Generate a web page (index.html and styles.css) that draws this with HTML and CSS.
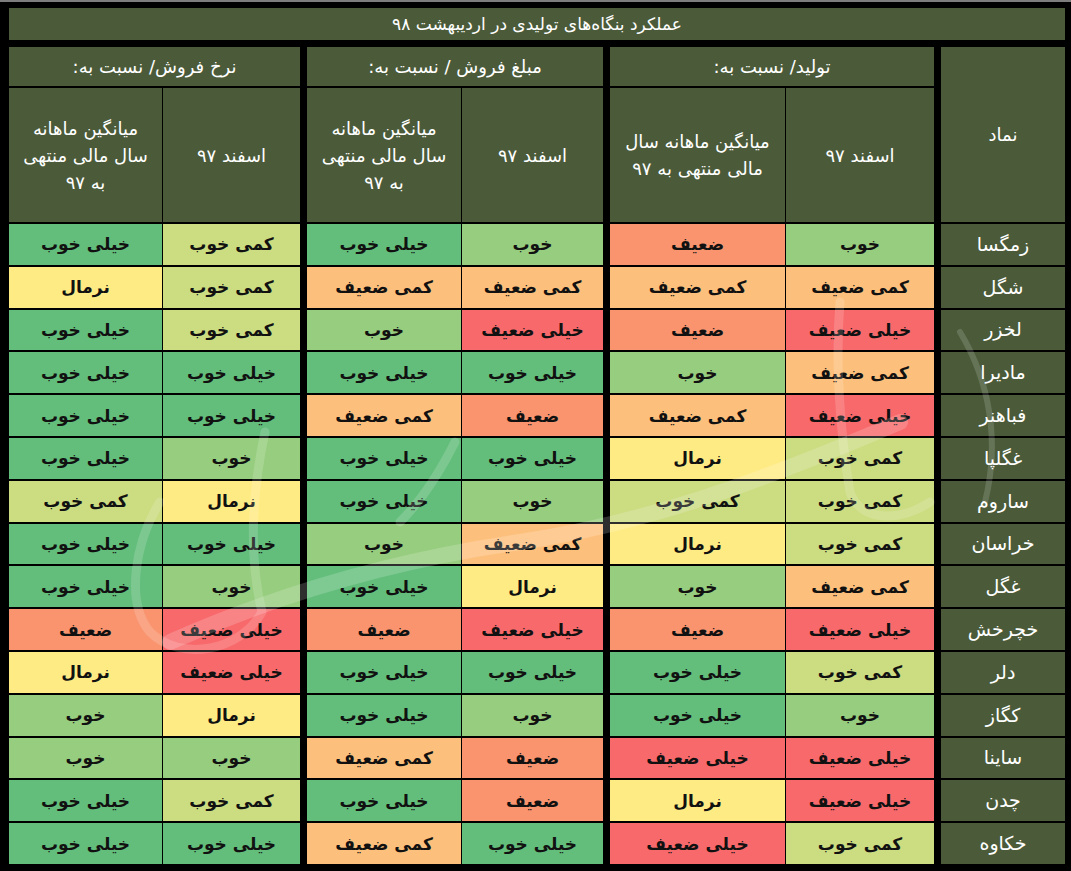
FILE: index.html
```html
<!DOCTYPE html>
<html lang="fa" dir="rtl">
<head>
<meta charset="utf-8">
<title>عملکرد بنگاه‌های تولیدی در اردیبهشت ۹۸</title>
<link rel="stylesheet" href="styles.css">
</head>
<body>
<div class="page">
  <div class="title">عملکرد بنگاه‌های تولیدی در اردیبهشت ۹۸</div>
  <div class="table">
    <div class="group sym">
      <div class="hd rspan">نماد</div>
      <div class="hd name">زمگسا</div>
      <div class="hd name">شگل</div>
      <div class="hd name">لخزر</div>
      <div class="hd name">مادیرا</div>
      <div class="hd name">فباهنر</div>
      <div class="hd name">غگلپا</div>
      <div class="hd name">ساروم</div>
      <div class="hd name">خراسان</div>
      <div class="hd name">غگل</div>
      <div class="hd name">خچرخش</div>
      <div class="hd name">دلر</div>
      <div class="hd name">کگاز</div>
      <div class="hd name">ساینا</div>
      <div class="hd name">چدن</div>
      <div class="hd name">خکاوه</div>
    </div>
    <div class="group prod">
      <div class="hd span2">تولید/ نسبت به:</div>
      <div class="hd">اسفند ۹۷</div>
      <div class="hd">میانگین ماهانه سال<br>مالی منتهی به ۹۷</div>
      <div class="c g">خوب</div><div class="c w">ضعیف</div>
      <div class="c sw">کمی ضعیف</div><div class="c sw">کمی ضعیف</div>
      <div class="c vw">خیلی ضعیف</div><div class="c w">ضعیف</div>
      <div class="c sw">کمی ضعیف</div><div class="c g">خوب</div>
      <div class="c vw">خیلی ضعیف</div><div class="c sw">کمی ضعیف</div>
      <div class="c sg">کمی خوب</div><div class="c n">نرمال</div>
      <div class="c sg">کمی خوب</div><div class="c sg">کمی خوب</div>
      <div class="c sg">کمی خوب</div><div class="c n">نرمال</div>
      <div class="c sw">کمی ضعیف</div><div class="c g">خوب</div>
      <div class="c vw">خیلی ضعیف</div><div class="c w">ضعیف</div>
      <div class="c sg">کمی خوب</div><div class="c vg">خیلی خوب</div>
      <div class="c g">خوب</div><div class="c vg">خیلی خوب</div>
      <div class="c vw">خیلی ضعیف</div><div class="c vw">خیلی ضعیف</div>
      <div class="c vw">خیلی ضعیف</div><div class="c n">نرمال</div>
      <div class="c sg">کمی خوب</div><div class="c vw">خیلی ضعیف</div>
    </div>
    <div class="group amount">
      <div class="hd span2">مبلغ فروش / نسبت به:</div>
      <div class="hd">اسفند ۹۷</div>
      <div class="hd">میانگین ماهانه<br>سال مالی منتهی<br>به ۹۷</div>
      <div class="c g">خوب</div><div class="c vg">خیلی خوب</div>
      <div class="c sw">کمی ضعیف</div><div class="c sw">کمی ضعیف</div>
      <div class="c vw">خیلی ضعیف</div><div class="c g">خوب</div>
      <div class="c vg">خیلی خوب</div><div class="c vg">خیلی خوب</div>
      <div class="c w">ضعیف</div><div class="c sw">کمی ضعیف</div>
      <div class="c vg">خیلی خوب</div><div class="c vg">خیلی خوب</div>
      <div class="c g">خوب</div><div class="c vg">خیلی خوب</div>
      <div class="c sw">کمی ضعیف</div><div class="c g">خوب</div>
      <div class="c n">نرمال</div><div class="c vg">خیلی خوب</div>
      <div class="c vw">خیلی ضعیف</div><div class="c w">ضعیف</div>
      <div class="c vg">خیلی خوب</div><div class="c vg">خیلی خوب</div>
      <div class="c g">خوب</div><div class="c vg">خیلی خوب</div>
      <div class="c w">ضعیف</div><div class="c sw">کمی ضعیف</div>
      <div class="c w">ضعیف</div><div class="c vg">خیلی خوب</div>
      <div class="c vg">خیلی خوب</div><div class="c sw">کمی ضعیف</div>
    </div>
    <div class="group rate">
      <div class="hd span2">نرخ فروش/ نسبت به:</div>
      <div class="hd">اسفند ۹۷</div>
      <div class="hd">میانگین ماهانه<br>سال مالی منتهی<br>به ۹۷</div>
      <div class="c sg">کمی خوب</div><div class="c vg">خیلی خوب</div>
      <div class="c sg">کمی خوب</div><div class="c n">نرمال</div>
      <div class="c sg">کمی خوب</div><div class="c vg">خیلی خوب</div>
      <div class="c vg">خیلی خوب</div><div class="c vg">خیلی خوب</div>
      <div class="c vg">خیلی خوب</div><div class="c vg">خیلی خوب</div>
      <div class="c g">خوب</div><div class="c vg">خیلی خوب</div>
      <div class="c n">نرمال</div><div class="c sg">کمی خوب</div>
      <div class="c vg">خیلی خوب</div><div class="c vg">خیلی خوب</div>
      <div class="c g">خوب</div><div class="c vg">خیلی خوب</div>
      <div class="c vw">خیلی ضعیف</div><div class="c w">ضعیف</div>
      <div class="c vw">خیلی ضعیف</div><div class="c n">نرمال</div>
      <div class="c n">نرمال</div><div class="c g">خوب</div>
      <div class="c g">خوب</div><div class="c g">خوب</div>
      <div class="c sg">کمی خوب</div><div class="c vg">خیلی خوب</div>
      <div class="c vg">خیلی خوب</div><div class="c vg">خیلی خوب</div>
    </div>
  </div>
  <svg class="watermark" width="1071" height="871" viewBox="0 0 1071 871" aria-hidden="true">
    <g fill="none" stroke="#ffffff" stroke-linecap="round" stroke-linejoin="round">
      <path class="wm-thick" d="M170 640 C 260 600, 380 560, 520 540 C 650 520, 760 480, 900 420"/>
      <path class="wm-mid" d="M265 430 C 250 500, 250 560, 262 610 C 240 650, 180 660, 150 630 C 125 600, 135 540, 160 500"/>
      <path class="wm-mid" d="M455 440 C 440 470, 420 500, 400 520"/>
      <path class="wm-mid" d="M840 300 C 835 360, 840 430, 850 490 C 860 520, 900 520, 930 500"/>
      <path class="wm-thin" d="M960 330 C 990 380, 1000 440, 985 500"/>
    </g>
  </svg>
</div>
</body>
</html>
```

FILE: styles.css
```css
html, body {
  margin: 0;
  padding: 0;
  background: #000;
}

body {
  font-family: "DejaVu Sans", "Noto Sans", sans-serif;
}

.page {
  position: relative;
  width: 1071px;
  height: 871px;
  box-sizing: border-box;
  border-top: 2px solid #7d7d7d;
  padding: 6px 6px 0 9px;
  direction: rtl;
  overflow: hidden;
}

.title {
  height: 32px;
  margin-bottom: 7px;
  background: #4b5b3a;
  color: #fff;
  display: flex;
  align-items: center;
  justify-content: center;
  font-size: 17px;
}

.table {
  display: flex;
  direction: rtl;
  gap: 7px;
}

.group {
  display: grid;
  grid-template-rows: 39px 134px repeat(15, 40.8px);
  row-gap: 2px;
  column-gap: 1px;
}

.sym { grid-template-columns: 124px; }
.prod { grid-template-columns: 148px 175px; }
.amount { grid-template-columns: 141px 154px; }
.rate { grid-template-columns: 137px 153px; }

.hd {
  background: #4b5b3a;
  color: #fff;
  display: flex;
  align-items: center;
  justify-content: center;
  text-align: center;
  font-size: 18px;
  line-height: 27px;
}

.name {
  font-size: 19px;
}

.span2 { grid-column: span 2; }
.rspan { grid-row: span 2; }

.c {
  display: flex;
  align-items: center;
  justify-content: center;
  font-size: 17px;
  font-weight: bold;
  color: #111;
}

.vg { background: #63be7b; }
.g  { background: #97cd7e; }
.sg { background: #cbdc81; }
.n  { background: #ffeb84; }
.sw { background: #fdc07c; }
.w  { background: #f9946f; }
.vw { background: #f8696b; }

.watermark {
  position: absolute;
  left: 0;
  top: 0;
  pointer-events: none;
}

.wm-thick { stroke-width: 16; stroke-opacity: 0.18; }
.wm-mid { stroke-width: 9; stroke-opacity: 0.16; }
.wm-thin { stroke-width: 6; stroke-opacity: 0.15; }
```
